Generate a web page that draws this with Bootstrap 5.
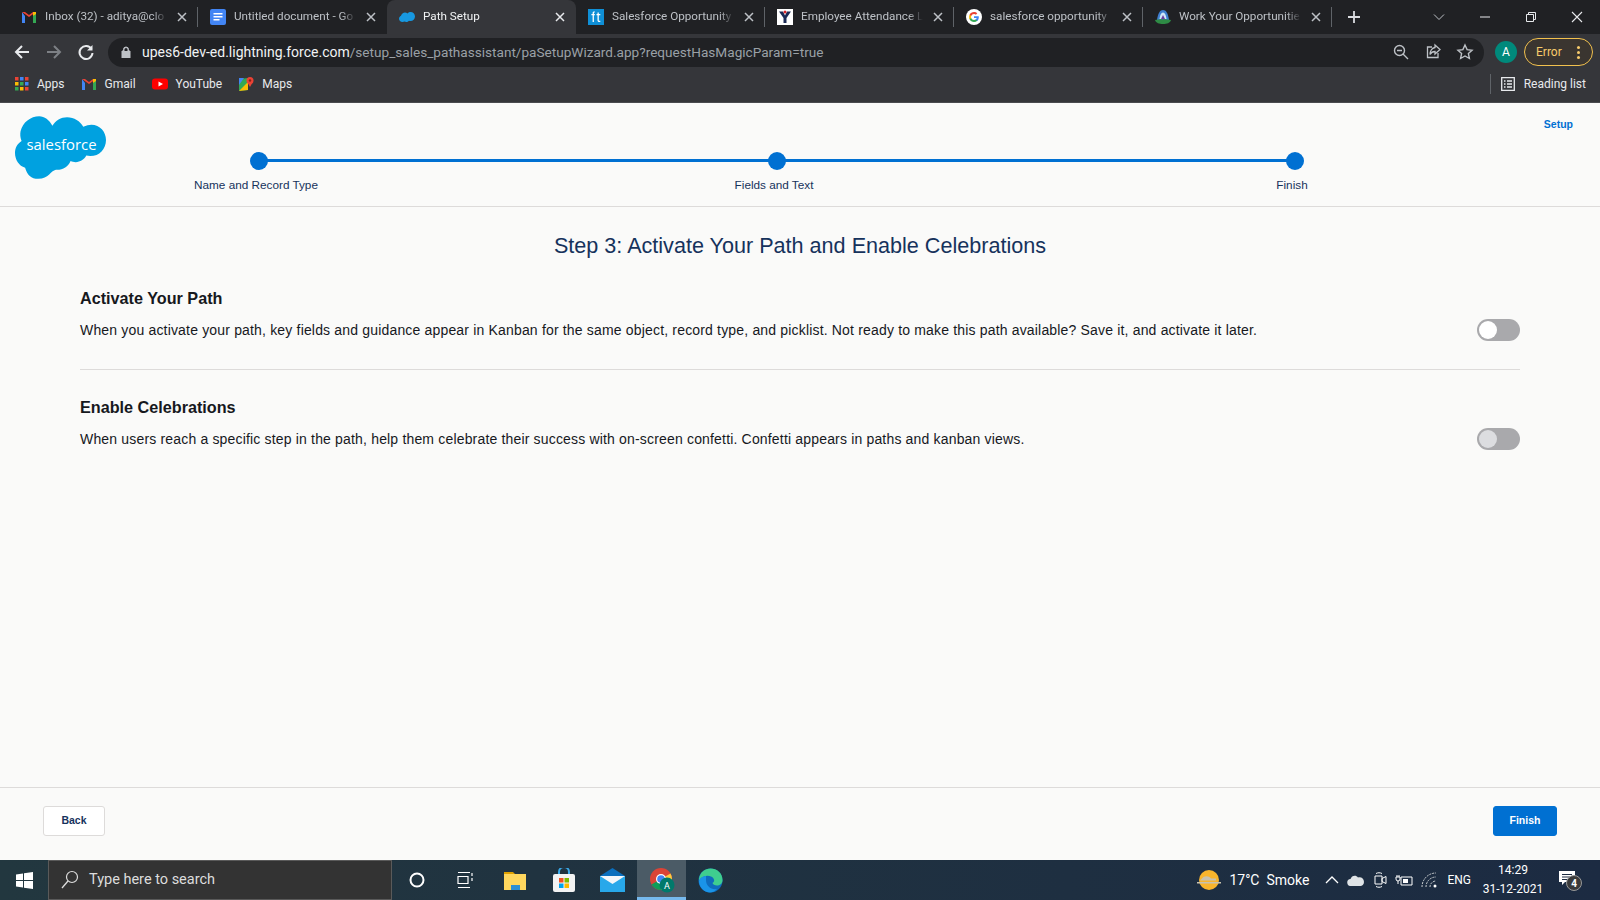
<!doctype html>
<html lang="en">
<head>
<meta charset="utf-8">
<title>Path Setup</title>
<link href="https://cdn.jsdelivr.net/npm/bootstrap@5.3.0/dist/css/bootstrap.min.css" rel="stylesheet">
<style>
html,body{height:900px;overflow:hidden}
body{font-family:"Liberation Sans",Arial,sans-serif;background:#fafaf9;color:#16325c}
.shell{height:900px}
.ui-font{font-family:Roboto,"Noto Sans",sans-serif}
.tabstrip{height:34px;background:#202124;padding-left:9px;color:#bdc1c6;font-size:11.7px}
.tabitem{width:189px;height:34px;padding-left:12px;gap:8px;position:relative}
.tabitem.sep::after{content:"";position:absolute;right:0;top:7px;height:20px;width:1px;background:#5f6368}
.tabitem.on{background:#35363a;color:#f1f3f4;border-radius:8px 8px 0 0}
.tabicon{width:16px;height:16px;flex:none;display:block}
.tabname{width:122px;white-space:nowrap;overflow:hidden;-webkit-mask-image:linear-gradient(90deg,#000 88%,transparent);mask-image:linear-gradient(90deg,#000 88%,transparent)}
.tabclose{width:10px;height:10px;flex:none;margin-left:2px}
.newtab{margin-left:15px}
.winctl{margin-left:auto;gap:34px;padding-right:17px;height:34px}
.toolrow{height:36px;background:#35363a;padding:0 0 0 13px;color:#e8eaed}
.navicon{width:18px;height:18px;margin-right:14px;flex:none}
.addr{height:29px;width:1376px;margin-left:-1px;background:#202124;border-radius:15px;padding:0 10px 0 13px;font-size:13.6px;color:#9aa0a6;white-space:nowrap}
.addr b{font-weight:400;font-size:14px;color:#f1f3f4}
.lockic{margin-right:11px}
.addr-tools{margin-left:auto;gap:14px}
.avatar{width:22px;height:22px;border-radius:50%;background:#00897b;color:#fff;font-size:12px;margin-left:11px}
.errpill{width:69px;height:28px;margin-left:7px;border:1px solid #f2c14e;border-radius:14px;color:#f7cb6b;font-size:12px;padding:0 12px 0 11px;background:#3a3530}
.dots3{width:3px;height:3px;background:#f7cb6b;border-radius:50%;box-shadow:0 -5px 0 #f7cb6b,0 5px 0 #f7cb6b}
.markrow{height:33px;background:#35363a;padding:0 0 4px 15px;color:#e8eaed;font-size:12px;border-bottom:1px solid #4a4b4f}
.markitem{gap:8px;margin-right:16px}
.readlist{margin-left:auto;gap:9px;padding-right:14px;height:20px;position:relative}
.readdiv{width:1px;height:20px;background:#5f6368;margin-right:1px}
.wizardhead{height:103px;border-bottom:1px solid #dddbda;position:relative;padding:0 0 0 15px;margin-top:1px}
.logoword{font-family:"Open Sans","Liberation Sans",sans-serif;font-size:14.7px;font-weight:400;fill:#fff}
.logo{width:91px;height:64px;flex:none;margin-top:12px;display:block}
.tracker{width:1054px;margin-left:144px;padding-top:48px}
.trackline{height:18px;position:relative}
.trackline::before{content:"";position:absolute;left:9px;right:9px;top:7px;height:3px;background:#0070d2}
.trackdot{width:18px;height:18px;background:#0070d2;border-radius:50%;position:relative}
.steplabels{font-size:11.75px;color:#16325c;margin-top:7px;line-height:15px;padding:0 11.5px 0 5.5px}
.steplbl{width:1px;white-space:nowrap;display:flex;justify-content:center}
.setuplink{font-size:10.5px;font-weight:700;color:#0070d2;text-decoration:none;position:absolute;right:27px;top:13px}
.wizardbody{padding:0 80px}
.wtitle{font-size:21.6px;font-weight:400;color:#16325c;text-align:center;margin:26px 0 0;line-height:26px}
.optrow{gap:20px}
.opth{font-size:16.2px;font-weight:700;color:#16181d;margin:0 0 14px;line-height:19px}
.optp{font-size:14px;color:#16181d;margin:0;line-height:17px;letter-spacing:.172px}
.wsection{padding-top:30px;padding-bottom:28px}
.wsection+.wsection{border-top:1px solid #dddbda;padding-top:28px}
.swtrack{width:43px;height:22px;border-radius:11px;background:#a9a9ac;padding:2px;flex:none;margin-top:30px}
.swknob{width:18px;height:18px;border-radius:50%;background:#fff}
.swknob.dim{background:#dcdde0}
.wizardfoot{margin-top:auto;height:73px;border-top:1px solid #dddbda;padding:18px 43px 0}
.wbtn{font-size:10.5px;font-weight:700;height:30px;padding:0;border-radius:3px;display:flex;align-items:center;justify-content:center}
.wbtn-back{width:62px;background:#fff;border:1px solid #dddbda;color:#16325c}
.wbtn-next{width:64px;background:#0070d2;border:1px solid #0070d2;color:#fff}
.taskbar{height:40px;background:linear-gradient(90deg,#22373f,#1c2b42);color:#fff;font-size:14px;flex:none}
.startbtn{width:48px;height:40px}
.searchbox{width:344px;height:40px;background:#333;border:1px solid #5a5a5a;color:#ddd;padding-left:12px;gap:10px;font-size:14.5px}
.tbicon{width:49px;height:40px}
.tbicon.act{background:#4b5b66;border-bottom:3px solid #76b9ed;padding-top:3px}
.tray{margin-left:auto;gap:0;height:40px;padding-right:19px}
.traytext{font-size:14px;white-space:nowrap}
.traygap{margin-left:-9px}
.traylang{font-size:12px}
.clock{font-size:12px;line-height:19px;text-align:center;width:76px}
.notifwrap{width:22px;height:24px}
.notifcount{left:7px;top:7px;width:16px;height:16px;background:#3a3a3a;border:1px solid #999;font-size:10px;font-weight:700}
</style>
</head>
<body>
<div class="shell d-flex flex-column">

  <div class="tabstrip ui-font d-flex align-items-center">
    <div class="tabitem sep d-flex align-items-center">
      <svg class="tabicon" viewBox="0 0 16 16"><path fill="#4285f4" d="M1 3v11h3V7z"/><path fill="#34a853" d="M12 7v7h3V3z"/><path fill="#ea4335" d="M1 3l7 5 7-5-3 0-4 3-4-3z"/><path fill="#fbbc04" d="M12 3h3v2l-3 2z"/></svg>
      <span class="tabname">Inbox (32) - aditya@clo</span>
      <svg class="tabclose" viewBox="0 0 10 10"><path d="M1 1l8 8M9 1l-8 8" stroke="#bdc1c6" stroke-width="1.5"/></svg>
    </div>
    <div class="tabitem d-flex align-items-center">
      <svg class="tabicon" viewBox="0 0 16 16"><rect width="16" height="16" rx="2" fill="#4285f4"/><path d="M3.5 4h9v1.6h-9zM3.5 7h9v1.6h-9zM3.5 10h6v1.6h-6z" fill="#fff"/></svg>
      <span class="tabname">Untitled document - Go</span>
      <svg class="tabclose" viewBox="0 0 10 10"><path d="M1 1l8 8M9 1l-8 8" stroke="#bdc1c6" stroke-width="1.5"/></svg>
    </div>
    <div class="tabitem on d-flex align-items-center">
      <svg class="tabicon" viewBox="0 0 16 16"><path fill="#1798e0" d="M3.5 13C1.500 13 0 11.600 0 9.800c0-1.400.9-2.500 2-3C2.500 4.800 4.200 3.500 6 3.500c1 0 1.800.3 2.500.9C9.300 3.600 10.300 3 11.500 3 14 3 16 5 16 7.500S14 12 11.500 12c-.6 0-1-.1-1.500-.3-.7.900-1.700 1.300-2.800 1.300-.6 0-1.200-.2-1.700-.5-.5.300-1.200.5-2 .5z"/></svg>
      <span class="tabname">Path Setup</span>
      <svg class="tabclose" viewBox="0 0 10 10"><path d="M1 1l8 8M9 1l-8 8" stroke="#e8eaed" stroke-width="1.5"/></svg>
    </div>
    <div class="tabitem sep d-flex align-items-center">
      <svg class="tabicon" viewBox="0 0 16 16"><rect width="16" height="16" fill="#0f8fd6"/><path d="M4.600 13V6.200H3.400V5h1.200V4.200C4.600 3 5.300 2.300 6.700 2.300v1.200c-.6 0-.8.300-.8.800V5h.9v1.200h-.9V13zM9.500 3.500h1.300V5h1.500v1.200h-1.500v5c0 .5.300.7 1.500.6V13c-2 .2-2.800-.4-2.800-1.700v-5H8.500V5h1z" fill="#fff"/></svg>
      <span class="tabname">Salesforce Opportunity</span>
      <svg class="tabclose" viewBox="0 0 10 10"><path d="M1 1l8 8M9 1l-8 8" stroke="#bdc1c6" stroke-width="1.500"/></svg>
    </div>
    <div class="tabitem sep d-flex align-items-center">
      <svg class="tabicon" viewBox="0 0 16 16"><rect width="16" height="16" fill="#fff"/><path d="M2 2.500l4 0 2 4 2-4 4 0-4.500 6.500V14h-3V9z" fill="#1b2a55"/><circle cx="8" cy="3" r="1.500" fill="#d8262c"/></svg>
      <span class="tabname">Employee Attendance L</span>
      <svg class="tabclose" viewBox="0 0 10 10"><path d="M1 1l8 8M9 1l-8 8" stroke="#bdc1c6" stroke-width="1.500"/></svg>
    </div>
    <div class="tabitem sep d-flex align-items-center">
      <svg class="tabicon" viewBox="0 0 16 16"><circle cx="8" cy="8" r="8" fill="#fff"/><path d="M12.800 8.200c0-.4 0-.7-.1-1H8v1.900h2.700c-.1.600-.5 1.200-1 1.500v1.300h1.600c1-.9 1.500-2.200 1.500-3.700z" fill="#4285f4"/><path d="M8 13c1.300 0 2.400-.4 3.300-1.200l-1.600-1.300c-.5.300-1 .5-1.700.5-1.300 0-2.400-.9-2.800-2H3.600v1.300C4.400 12 6.100 13 8 13z" fill="#34a853"/><path d="M5.200 9c-.2-.6-.2-1.300 0-1.900V5.800H3.600c-.7 1.400-.7 3 0 4.500z" fill="#fbbc04"/><path d="M8 5c.7 0 1.400.3 1.900.7l1.400-1.400C10.400 3.500 9.300 3 8 3 6.100 3 4.400 4 3.600 5.800l1.600 1.300C5.600 5.900 6.700 5 8 5z" fill="#ea4335"/></svg>
      <span class="tabname">salesforce opportunity</span>
      <svg class="tabclose" viewBox="0 0 10 10"><path d="M1 1l8 8M9 1l-8 8" stroke="#bdc1c6" stroke-width="1.500"/></svg>
    </div>
    <div class="tabitem sep d-flex align-items-center">
      <svg class="tabicon" viewBox="0 0 16 16"><path d="M8 1C5 1 3 4 2 11h12C13 4 11 1 8 1z" fill="#3f7fd0"/><path d="M8 3.500C6.200 3.500 5 6 4.500 10h7C11 6 9.800 3.500 8 3.500z" fill="#cfe6f8"/><path d="M8 6l-2 4h4z" fill="#6a3fa0"/><path d="M0 11c3-1 13-1 16 0-1 3-4 4-8 4s-7-1-8-4z" fill="#2e8b45"/></svg>
      <span class="tabname">Work Your Opportunitie</span>
      <svg class="tabclose" viewBox="0 0 10 10"><path d="M1 1l8 8M9 1l-8 8" stroke="#bdc1c6" stroke-width="1.500"/></svg>
    </div>
    <svg class="newtab" width="14" height="14" viewBox="0 0 14 14"><path d="M7 1v12M1 7h12" stroke="#dadce0" stroke-width="1.800"/></svg>
    <div class="winctl d-flex align-items-center">
      <svg width="12" height="12" viewBox="0 0 12 12"><path d="M1 3.500l5 5 5-5" fill="none" stroke="#bdc1c6"/></svg>
      <svg width="12" height="12" viewBox="0 0 12 12"><path d="M1 6h10" stroke="#e8eaed"/></svg>
      <svg width="12" height="12" viewBox="0 0 12 12"><path d="M1.500 3.500h7v7h-7zM3.500 3.500v-2h7v7h-2" fill="none" stroke="#e8eaed"/></svg>
      <svg width="12" height="12" viewBox="0 0 12 12"><path d="M1 1l10 10M11 1L1 11" stroke="#e8eaed" stroke-width="1.100"/></svg>
    </div>
  </div>

  <div class="toolrow ui-font d-flex align-items-center">
    <svg class="navicon" viewBox="0 0 18 18"><path d="M16 9H3M9 3L3 9l6 6" fill="none" stroke="#e8eaed" stroke-width="2"/></svg>
    <svg class="navicon" viewBox="0 0 18 18"><path d="M2 9h13M9 3l6 6-6 6" fill="none" stroke="#7d8085" stroke-width="2"/></svg>
    <svg class="navicon" viewBox="0 0 18 18"><path d="M14.500 6A6.500 6.500 0 1 0 15.500 10" fill="none" stroke="#e8eaed" stroke-width="2"/><path d="M15.500 2v5.500H10z" fill="#e8eaed"/></svg>
    <div class="addr d-flex align-items-center">
      <svg class="lockic" width="10" height="12" viewBox="0 0 10 12"><path d="M1 5h8v7H1zM2.500 5V3.500a2.500 2.500 0 0 1 5 0V5" fill="#bdc1c6" stroke="#bdc1c6"/><path d="M3.500 5V3.500a1.500 1.500 0 0 1 3 0V5z" fill="#202124"/></svg>
      <span><b>upes6-dev-ed.lightning.force.com</b>/setup_sales_pathassistant/paSetupWizard.app?requestHasMagicParam=true</span>
      <div class="addr-tools d-flex align-items-center">
        <svg width="18" height="18" viewBox="0 0 18 18"><circle cx="7.500" cy="7.500" r="5" fill="none" stroke="#bdc1c6" stroke-width="1.400"/><path d="M11 11l5 5M5 7.500h5" stroke="#bdc1c6" stroke-width="1.400"/></svg>
        <svg width="18" height="18" viewBox="0 0 18 18"><path d="M8 4H3.500v10.500h10.500V10" fill="none" stroke="#bdc1c6" stroke-width="1.300"/><path d="M11 2l5 4.500-5 4.500V8.500C8.500 8.500 7 9.500 6 11.500 6 8 8 5 11 4.500z" fill="none" stroke="#bdc1c6" stroke-width="1.300"/></svg>
        <svg width="18" height="18" viewBox="0 0 18 18"><path d="M9 2l2.100 4.600 5 .6-3.700 3.400 1 4.900L9 13l-4.400 2.500 1-4.900L1.900 7.200l5-.6z" fill="none" stroke="#bdc1c6" stroke-width="1.400"/></svg>
      </div>
    </div>
    <div class="avatar d-flex align-items-center justify-content-center">A</div>
    <div class="errpill d-flex align-items-center justify-content-between"><span>Error</span><span class="dots3"></span></div>
  </div>

  <div class="markrow ui-font d-flex align-items-center">
    <div class="markitem d-flex align-items-center">
      <svg width="14" height="14" viewBox="0 0 14 14"><g><rect width="3.500" height="3.500" fill="#ea4335"/><rect x="5" width="3.500" height="3.500" fill="#4285f4"/><rect x="10" width="3.500" height="3.500" fill="#ea4335"/><rect y="5" width="3.500" height="3.500" fill="#fbbc04"/><rect x="5" y="5" width="3.500" height="3.500" fill="#34a853"/><rect x="10" y="5" width="3.500" height="3.500" fill="#4285f4"/><rect y="10" width="3.500" height="3.500" fill="#34a853"/><rect x="5" y="10" width="3.500" height="3.500" fill="#fbbc04"/><rect x="10" y="10" width="3.500" height="3.500" fill="#ea4335"/></g></svg>
      <span>Apps</span>
    </div>
    <div class="markitem d-flex align-items-center">
      <svg class="tabicon" viewBox="0 0 16 16"><path fill="#4285f4" d="M1 3v11h3V7z"/><path fill="#34a853" d="M12 7v7h3V3z"/><path fill="#ea4335" d="M1 3l7 5 7-5-3 0-4 3-4-3z"/><path fill="#fbbc04" d="M12 3h3v2l-3 2z"/></svg>
      <span>Gmail</span>
    </div>
    <div class="markitem d-flex align-items-center">
      <svg class="tabicon" viewBox="0 0 16 16"><rect y="2.500" width="16" height="11" rx="3" fill="#f00"/><path d="M6.500 5.500L11 8l-4.500 2.500z" fill="#fff"/></svg>
      <span>YouTube</span>
    </div>
    <div class="markitem d-flex align-items-center">
      <svg class="tabicon" viewBox="0 0 16 16"><path d="M1 3l9-1v12l-9 1z" fill="#34a853"/><path d="M1 15L10 6v8z" fill="#fbbc04"/><path d="M1 9L6 2H1z" fill="#4285f4"/><circle cx="12" cy="4.500" r="3.500" fill="#ea4335"/><path d="M9.500 6.500L12 11l2.500-4.500z" fill="#ea4335"/><circle cx="12" cy="4.500" r="1.200" fill="#8c1f17"/></svg>
      <span>Maps</span>
    </div>
    <div class="readlist d-flex align-items-center">
      <span class="readdiv"></span>
      <svg width="14" height="14" viewBox="0 0 14 14"><path d="M.7.700h12.600v12.600H.7zM3 4h1.500M6 4h5M3 7h1.500M6 7h5M3 10h1.500M6 10h5" fill="none" stroke="#e8eaed" stroke-width="1.300"/></svg>
      <span>Reading list</span>
    </div>
  </div>

  <div class="wizardhead d-flex align-items-start">
    <svg class="logo" viewBox="0 0 90 63" role="img" aria-label="Salesforce"><path fill="#00a1e0" d="M37 9.500C40 4 45.500 1 51.500 1c7 0 13 4 16 9.500 3-1.300 5.500-2 8-2C84 8.500 90 15.500 90 23.500c0 9-6.500 16-15.500 16-1.500 0-3-.2-4-.5-2 4-6 6.500-10.500 6.500-2 0-3.500-.5-5-1.200C52.500 50 47 53.500 40.500 53c-5.500 1-7 9-17.500 9C16 62 12 58 10 51 4 49.500 0 43 0 36.500 0 31.500 2 27.500 6.500 24.500 5 21 5 18 5.500 15 7.500 6 15.500 0 24 0c5 0 10 3.500 13 9.500z"/><text class="logoword" x="46" y="33" text-anchor="middle">salesforce</text></svg>
    <div class="tracker d-flex flex-column">
      <div class="trackline d-flex justify-content-between">
        <span class="trackdot"></span><span class="trackdot"></span><span class="trackdot"></span>
      </div>
      <div class="steplabels d-flex justify-content-between">
        <span class="steplbl"><span>Name and Record Type</span></span>
        <span class="steplbl"><span>Fields and Text</span></span>
        <span class="steplbl"><span>Finish</span></span>
      </div>
    </div>
    <a class="setuplink" href="#">Setup</a>
  </div>

  <div class="wizardbody">
    <h1 class="wtitle">Step 3: Activate Your Path and Enable Celebrations</h1>
    <section class="wsection d-flex justify-content-between optrow">
      <div>
        <h2 class="opth">Activate Your Path</h2>
        <p class="optp">When you activate your path, key fields and guidance appear in Kanban for the same object, record type, and picklist. Not ready to make this path available? Save it, and activate it later.</p>
      </div>
      <div class="swtrack"><div class="swknob"></div></div>
    </section>
    <section class="wsection d-flex justify-content-between optrow">
      <div>
        <h2 class="opth">Enable Celebrations</h2>
        <p class="optp">When users reach a specific step in the path, help them celebrate their success with on-screen confetti. Confetti appears in paths and kanban views.</p>
      </div>
      <div class="swtrack"><div class="swknob dim"></div></div>
    </section>
  </div>

  <div class="wizardfoot d-flex justify-content-between align-items-start">
    <button class="btn wbtn wbtn-back" type="button">Back</button>
    <button class="btn wbtn wbtn-next" type="button">Finish</button>
  </div>

  <div class="taskbar ui-font d-flex align-items-center">
    <div class="startbtn d-flex align-items-center justify-content-center">
      <svg width="17" height="17" viewBox="0 0 17 17"><path fill="#fff" d="M0 2.500l7-1v6.500H0zM8 1.300L17 0v8H8zM0 9h7v6.500l-7-1zM8 9h9v8l-9-1.300z"/></svg>
    </div>
    <div class="searchbox d-flex align-items-center">
      <svg width="18" height="20" viewBox="0 0 18 20"><circle cx="11" cy="7" r="5.500" fill="none" stroke="#ddd" stroke-width="1.200"/><path d="M7 11l-6 7" stroke="#ddd" stroke-width="1.300"/></svg>
      <span>Type here to search</span>
    </div>
    <div class="d-flex align-items-center">
      <div class="tbicon d-flex align-items-center justify-content-center"><svg width="16" height="16" viewBox="0 0 16 16"><circle cx="8" cy="8" r="6.500" fill="none" stroke="#fff" stroke-width="2"/></svg></div>
      <div class="tbicon d-flex align-items-center justify-content-center"><svg width="17" height="20" viewBox="0 0 17 20"><path d="M1 2.500h12M1 17.500h12M1 6.500h10v7H1zM15 3v3M15 8v3" fill="none" stroke="#fff" stroke-width="1.200"/></svg></div>
      <div class="tbicon d-flex align-items-center justify-content-center"><svg width="24" height="20" viewBox="0 0 24 20"><path d="M1 2h9l2 2h-11z" fill="#e0a100"/><rect x="1" y="4" width="22" height="16" fill="#ffd75e"/><rect x="8" y="15" width="9" height="5" fill="#2d8fd5"/></svg></div>
      <div class="tbicon d-flex align-items-center justify-content-center"><svg width="24" height="24" viewBox="0 0 24 24"><path d="M7 7V4a5 5 0 0 1 10 0v3" fill="none" stroke="#3aa9e8" stroke-width="2"/><rect x="1" y="6" width="22" height="18" rx="2" fill="#f3f3f3"/><rect x="7" y="10" width="4.500" height="4.500" fill="#f25022"/><rect x="12.500" y="10" width="4.500" height="4.500" fill="#7fba00"/><rect x="7" y="15.500" width="4.500" height="4.500" fill="#00a4ef"/><rect x="12.500" y="15.500" width="4.500" height="4.500" fill="#ffb900"/></svg></div>
      <div class="tbicon d-flex align-items-center justify-content-center"><svg width="25" height="24" viewBox="0 0 25 24"><path d="M0 8l12.500-8L25 8v16H0z" fill="#0a6fbe"/><path d="M0 8h25v16H0z" fill="#28a8ea"/><path d="M0 8l12.500 8L25 8z" fill="#f2f6fa"/></svg></div>
      <div class="tbicon act d-flex align-items-center justify-content-center"><svg width="26" height="26" viewBox="0 0 26 26"><circle cx="12" cy="12" r="11" fill="#db4437"/><path d="M12 12L2.500 17.500A11 11 0 0 0 12 23z" fill="#0f9d58"/><path d="M12 12l9.500-5.500A11 11 0 0 1 12 23z" fill="#ffcd40"/><circle cx="12" cy="12" r="5" fill="#fff"/><circle cx="12" cy="12" r="3.800" fill="#4285f4"/><circle cx="18" cy="18" r="7.500" fill="#00796b"/><text x="18" y="21.500" text-anchor="middle" font-size="9" fill="#fff">A</text></svg></div>
      <div class="tbicon d-flex align-items-center justify-content-center"><svg width="25" height="25" viewBox="0 0 25 25"><circle cx="12.500" cy="12.500" r="12" fill="#0f6cbd"/><path d="M1 11C2 4 7 .5 12.500.5 19 .5 24.500 5 24.500 12c0 4-3 5.500-5.500 5.500s-4-1-4.500-2.500c2-1 2-3 1-4.500C14 8 9.500 7 6 8.500 3.500 9.500 1.500 11 1 13z" fill="#3fce8f"/><path d="M8 12c0 6 5 10 11 9-2 2.500-5 3.500-7 3.500C6 24.500 1 19 1 13c1-3 3-4.500 7-5z" fill="#1a94e8"/></svg></div>
    </div>
    <div class="tray d-flex align-items-center">
      <svg width="24" height="24" viewBox="0 0 24 24" class="me-2"><circle cx="12" cy="12" r="10" fill="#f9b52c"/><path d="M0 14h24v1.500H0zM5 10.500c2-3 7-3 9 0h5v2H3z" fill="#c9c2ad"/></svg>
      <span class="traytext me-3">17°C</span>
      <span class="traytext me-3 traygap">Smoke</span>
      <svg width="14" height="10" viewBox="0 0 14 10" class="me-2"><path d="M1 8l6-6 6 6" fill="none" stroke="#fff" stroke-width="1.300"/></svg>
      <svg width="18" height="12" viewBox="0 0 18 12" class="me-2"><path d="M4 12a3.500 3.500 0 0 1-.5-7C4.500 1.500 9 .5 11 3.500c3-1 6 1 6 4.500 0 2.500-2 4-3.500 4z" fill="#dfe3e6"/></svg>
      <svg width="14" height="18" viewBox="0 0 14 18" class="me-2"><path d="M2 5h7v8H2zM9 7.500l4-2v7l-4-2zM3 2.500C5 1.500 7 1.500 9 2.500M3 15.500c2 1 4 1 6 0" fill="none" stroke="#fff"/></svg>
      <svg width="18" height="12" viewBox="0 0 18 12" class="me-2"><path d="M6 3h11v8H6z" fill="none" stroke="#fff"/><path d="M8 5h5v4H8z" fill="#fff"/><path d="M1 3h4v2a2 2 0 0 1-4 0zM2 1v2M4 1v2M3 7v3" fill="none" stroke="#fff"/></svg>
      <svg width="18" height="16" viewBox="0 0 18 16" class="me-2"><path d="M1 15A14 14 0 0 1 15 1M5 15A10 10 0 0 1 15 5M9 15A6 6 0 0 1 15 9" fill="none" stroke="#cfd3d6" stroke-dasharray="2 1"/><circle cx="14" cy="14" r="1.500" fill="#fff"/></svg>
      <span class="traytext traylang me-1">ENG</span>
      <div class="clock"><div>14:29</div><div>31-12-2021</div></div>
      <div class="position-relative ms-2 notifwrap">
        <svg width="17" height="16" viewBox="0 0 17 16"><path d="M0 0h16v11H6l-3 3v-3H0z" fill="#fff"/><path d="M3 3.500h10M3 6h10M3 8.500h7" stroke="#1c2b42"/></svg>
        <span class="position-absolute d-flex align-items-center justify-content-center rounded-circle notifcount">4</span>
      </div>
    </div>
  </div>
</div>
</body>
</html>
